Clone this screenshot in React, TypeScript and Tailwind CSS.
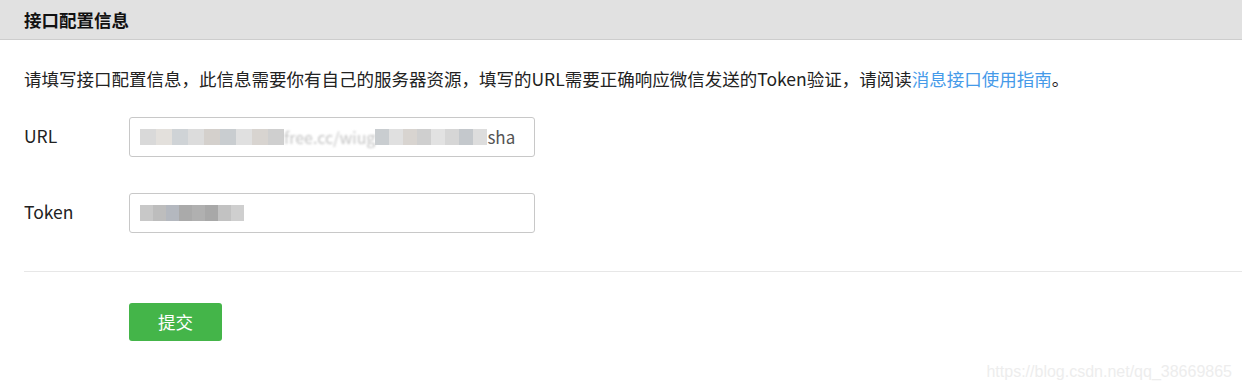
import React from 'react';

const font = { fontFamily: '"Microsoft YaHei", "Noto Sans CJK SC", sans-serif' };

const urlBlocks = ['#d9d9d9', '#e3e0dc', '#cfd3d6', '#dcdcdc', '#d4d0cc', '#c9cdd0', '#e0e0e0', '#d8d4d0', '#cfcfcf', '#e2e2e2', '#d6d6d6', '#c4c8cc', '#dddddd', '#d2d2d2'];
const tokenBlocks = ['#c8c8c8', '#bdbdbd', '#b4b8bf', '#aaaaaa', '#b0b0b0', '#a8a8a8', '#c2c2c2', '#cfcfcf'];

const Blur = ({ colors, size }: { colors: string[]; size: number }) => (
  <div className="flex shrink-0 items-center blur-[0.6px]">
    {colors.map((c, i) => (
      <span key={i} className="inline-block h-[16px]" style={{ background: c, width: size }} />
    ))}
  </div>
);

const Field = ({ label, children }: { label: string; children: React.ReactNode }) => (
  <div className="flex items-center">
    <label className="w-[105px] -translate-y-[1px] text-[17.5px] text-[#222]">{label}</label>
    <div className="flex h-[40px] w-[406px] items-center overflow-hidden rounded-[3px] border border-[#c8c8c8] bg-white pl-[10px]">
      {children}
    </div>
  </div>
);

export default function App() {
  return (
    <div className="relative h-[392px] w-[1242px] overflow-hidden bg-white text-[#222]" style={font}>
      <div className="flex h-[40px] items-center border-b border-[#cdcdcd] bg-[#e1e1e1] px-[24px]">
        <h2 className="text-[17.5px] font-bold leading-[24px] text-[#111]">接口配置信息</h2>
      </div>

      <div className="pl-[24px]">
        <p className="mt-[26px] whitespace-nowrap text-[17.5px] leading-[26px]">
          请填写接口配置信息，此信息需要你有自己的服务器资源，填写的URL需要正确响应微信发送的Token验证，请阅读
          <a className="text-[#459ae9]">消息接口使用指南</a>。
        </p>

        <div className="mt-[25px] flex flex-col gap-[36px]">
          <Field label="URL">
            <div className="flex items-center">
              <Blur colors={urlBlocks.slice(0, 9)} size={16} />
              <span className="shrink-0 text-[16px] text-[#c4c4c4] blur-[1px]">free.cc/wiug</span>
              <Blur colors={urlBlocks.slice(5, 13)} size={14} />
              <span className="shrink-0 text-[17px] text-[#555]">sha</span>
            </div>
          </Field>
          <Field label="Token">
            <Blur colors={tokenBlocks} size={13} />
          </Field>
        </div>

        <div className="mt-[38px] border-t border-[#e7e7e7]" />

        <button className="ml-[105px] mt-[31px] h-[38px] w-[93px] rounded-[3px] bg-[#44b549] text-[17.5px] text-white">
          提交
        </button>
      </div>

      <div className="absolute bottom-[8px] right-[10px] text-[16px] text-[#ededed]" style={{ fontFamily: '"Liberation Sans", Arial, sans-serif' }}>
        https://blog.csdn.net/qq_38669865
      </div>
    </div>
  );
}
